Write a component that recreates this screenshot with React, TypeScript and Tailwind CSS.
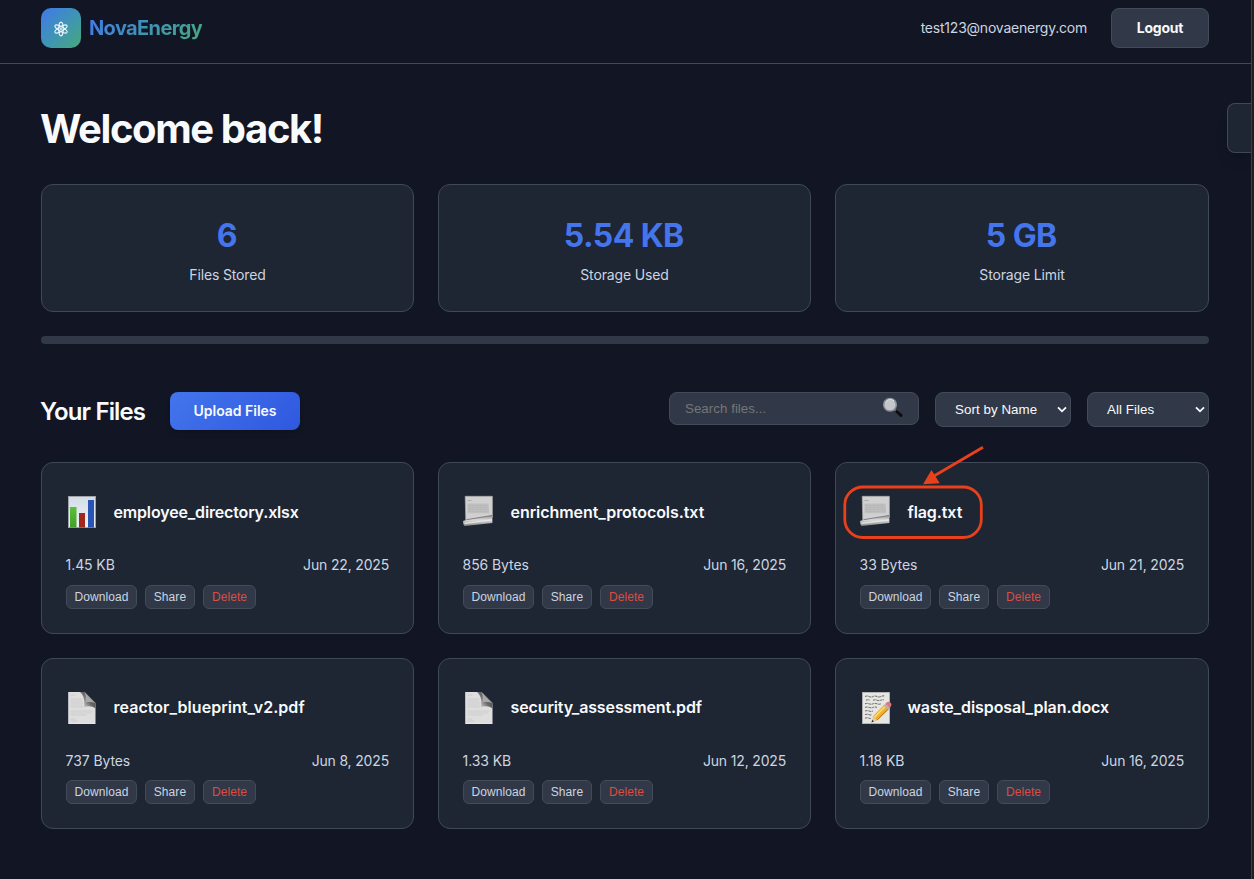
import React from 'react';

type Kind = 'chart' | 'scroll' | 'page' | 'memo';

interface FileEntry {
  name: string;
  size: string;
  date: string;
  kind: Kind;
  tracking: string;
  flagged?: boolean;
}

const files: FileEntry[] = [
  { name: 'employee_directory.xlsx', size: '1.45 KB', date: 'Jun 22, 2025', kind: 'chart', tracking: 'tracking-[-0.16px]' },
  { name: 'enrichment_protocols.txt', size: '856 Bytes', date: 'Jun 16, 2025', kind: 'scroll', tracking: 'tracking-[-0.06px]' },
  { name: 'flag.txt', size: '33 Bytes', date: 'Jun 21, 2025', kind: 'scroll', tracking: 'tracking-[-0.08px]', flagged: true },
  { name: 'reactor_blueprint_v2.pdf', size: '737 Bytes', date: 'Jun 8, 2025', kind: 'page', tracking: 'tracking-[0.04px]' },
  { name: 'security_assessment.pdf', size: '1.33 KB', date: 'Jun 12, 2025', kind: 'page', tracking: 'tracking-[-0.12px]' },
  { name: 'waste_disposal_plan.docx', size: '1.18 KB', date: 'Jun 16, 2025', kind: 'memo', tracking: 'tracking-[-0.06px]' },
];

const stats = [
  { value: '6', label: 'Files Stored' },
  { value: '5.54 KB', label: 'Storage Used' },
  { value: '5 GB', label: 'Storage Limit' },
];

function AtomIcon() {
  return (
    <svg width="16" height="16" viewBox="0 0 16 16" fill="none" stroke="#f0f6fa" strokeWidth="1.1" className="mt-[2px]">
      <ellipse cx="8" cy="8" rx="2.2" ry="6.9" />
      <ellipse cx="8" cy="8" rx="2.2" ry="6.9" transform="rotate(60 8 8)" />
      <ellipse cx="8" cy="8" rx="2.2" ry="6.9" transform="rotate(120 8 8)" />
      <circle cx="8" cy="8" r="1" fill="#f0f6fa" stroke="none" />
    </svg>
  );
}

function ChartIcon() {
  return (
    <svg width="32" height="34" viewBox="0 0 32 34">
      <defs>
        <linearGradient id="chartBg" x1="0" y1="0" x2="0" y2="1">
          <stop offset="0" stopColor="#d3dce6" />
          <stop offset="1" stopColor="#eef2f6" />
        </linearGradient>
        <linearGradient id="barGreen" x1="0" y1="0" x2="0" y2="1">
          <stop offset="0" stopColor="#5cc03c" />
          <stop offset="1" stopColor="#429f29" />
        </linearGradient>
      </defs>
      <rect x="2.5" y="1.5" width="27" height="31" fill="url(#chartBg)" stroke="#9da2ab" />
      <rect x="4" y="12" width="6.5" height="20.5" fill="url(#barGreen)" />
      <rect x="13" y="18" width="6" height="14.5" fill="#a3281b" />
      <rect x="22" y="5" width="6" height="27.5" fill="#2854b5" />
    </svg>
  );
}

function ScrollIcon() {
  return (
    <svg width="32" height="34" viewBox="0 0 32 34">
      <defs>
        <linearGradient id="rollShade" x1="0" y1="0" x2="0" y2="1">
          <stop offset="0" stopColor="#8f8f8f" />
          <stop offset="0.45" stopColor="#dcdcdc" />
          <stop offset="1" stopColor="#858585" />
        </linearGradient>
      </defs>
      <g transform="translate(-0.5 0.3)">
        <path d="M2.7 1h27.2v21L3.3 26z" fill="#d0d0d0" stroke="#aaa" strokeWidth="0.7" />
        <path d="M5 5.2h4" stroke="#999" strokeWidth="0.7" />
        <path d="M5 8.3h21l.7 9.700H5z" fill="#bfbfbf" />
        <path d="M5 10h20M6 12h20M5 14h21M6 16h20" stroke="#b2b2b2" strokeWidth="0.6" strokeDasharray="3 .8" />
        <path d="M1 25.5 29.9 20v7.8L2.3 30.6C.7 30.2.2 26.3 1 25.5z" fill="url(#rollShade)" />
        <path d="M4 24.4 29.5 20.2" stroke="#777" strokeWidth="0.9" />
        <path d="M2 28 29.5 24.6" stroke="#e6e6e6" strokeWidth="1.3" />
      </g>
    </svg>
  );
}

function PageIcon() {
  return (
    <svg width="32" height="34" viewBox="0 0 32 34">
      <defs>
        <linearGradient id="foldShade" x1="1" y1="0.2" x2="0.1" y2="0.9">
          <stop offset="0" stopColor="#3c3c3c" />
          <stop offset="0.5" stopColor="#6a6a6a" />
          <stop offset="1" stopColor="#dedede" />
        </linearGradient>
      </defs>
      <g transform="translate(0 1)">
        <path d="M2.200 1h16.300l11 11v20.800H2.200z" fill="#dedede" />
        <path
          d="M4.500 4h5M4.500 8h12M4.500 10h12M4.500 12h13M4.500 14h12M4.500 16h13M4.500 20h22M4.500 22h21M4.500 24h16M4.500 28h5M4.500 30h7"
          stroke="#c8c8c8"
          strokeWidth="0.75"
        />
        <path d="M14 1h4.500l11 11v5.500c-3-2.300-7-2.800-11.500-1.500C19 10 18 4.500 14 1z" fill="url(#foldShade)" />
        <path d="M18.500 1.200c1.400 3.200 1.500 6.300.8 10.200 4-.7 7.500-.3 10 .9z" fill="#a8a8a8" />
        <path d="M2.500 32.500h26.800" stroke="#f2f2f2" strokeWidth="0.8" />
      </g>
    </svg>
  );
}

function MemoIcon() {
  return (
    <svg width="34" height="34" viewBox="0 0 34 34">
      <g transform="translate(0 1)">
        <rect x="2.400" y="1.300" width="27.200" height="31.400" fill="#e6e6e3" stroke="#bdbdba" strokeWidth="0.6" />
        <path
          d="M5 5.500q2-1 4 0t4 0t4 0t4 0t4-.5M6 9.200q2-.8 4 0M13 9.200q2-.8 4 0t4 0t3-.3M5 12.800q2-.8 4 0t4 0t4 0t4 0M5 16.400q2-.8 4 0t4 0t4 0M5 20q2-.8 4 0t4 0M5 23.600q2-.8 4 0t3 0M5 27.200q2-.8 4 0t2 0"
          fill="none"
          stroke="#666"
          strokeWidth="1"
          strokeDasharray="2.600 .7"
        />
        <path d="M11.500 31.500l1.400-6.200 4.400 4.200z" fill="#e7c898" />
        <path d="M11.500 31.500l.7-2.700 1.700 1.600z" fill="#333" />
        <path d="M12.900 25.300 24.500 13.600l4.800 4.400-12 11.500z" fill="#eeb02d" />
        <path d="M14.400 26.400 25.800 14.800" stroke="#ffdc6a" strokeWidth="1.500" />
        <path d="M17 29 28.800 17.400" stroke="#b97813" strokeWidth="1" />
        <path d="M23.600 14.600l1.800-1.800 4.900 4.400-1.900 1.800z" fill="#a9b5bf" />
        <path d="M25.400 12.800l1.500-1.500c2.200-1.900 5.700 1.300 4.200 3.600l-1.300 2z" fill="#e0737b" />
      </g>
    </svg>
  );
}

function MagnifierIcon() {
  return (
    <svg width="22" height="22" viewBox="0 0 22 22" className="relative -left-px -top-px">
      <path d="M12.500 12.500l6 5.500" stroke="#777" strokeWidth="2" />
      <path d="M14.700 14.500l4.300 3.900" stroke="#0c0c0c" strokeWidth="3" strokeLinecap="round" />
      <circle cx="8" cy="7.800" r="6.300" fill="#c4c6cb" stroke="#8c9096" strokeWidth="1.500" />
      <path d="M3.500 5.800a5.200 5.200 0 0 1 8.500-2" fill="none" stroke="#dfe1e4" strokeWidth="1" />
    </svg>
  );
}

const icons: Record<Kind, () => React.JSX.Element> = {
  chart: ChartIcon,
  scroll: ScrollIcon,
  page: PageIcon,
  memo: MemoIcon,
};

function Callout() {
  return (
    <svg className="pointer-events-none absolute left-0 top-[-25px]" width="160" height="110" viewBox="0 0 160 110" fill="none">
      <rect x="8.800" y="49" width="136.500" height="50.500" rx="18" stroke="#e9411b" strokeWidth="2.800" />
      <path d="M147 9.200 98 38" stroke="#e9411b" strokeWidth="2.800" />
      <path d="M87 46.200 95.500 32 103.700 45.200z" fill="#e9411b" />
    </svg>
  );
}

function SmallButton({ children, width, danger }: { children: string; width: string; danger?: boolean }) {
  return (
    <button
      className={
        'h-6 whitespace-nowrap rounded-[6px] border border-[#434b5a] bg-[#313949] text-center font-["Liberation_Sans",Arial,sans-serif] text-[12px] leading-[22px] tracking-[0.08px] ' +
        width +
        (danger ? ' text-[#dc4c40]' : ' text-[#ccd5e0]')
      }
    >
      {children}
    </button>
  );
}

function FileCard({ file }: { file: FileEntry }) {
  const Icon = icons[file.kind];
  return (
    <article className="relative flex h-[171.5px] flex-col rounded-xl border border-[#404959] bg-[#1e2533] pl-[24px] pr-[24px] pt-[30.9px]">
      <div className="flex h-[36px] items-center">
        <div className="h-[34px] w-8 shrink-0">
          <Icon />
        </div>
        <h3 className={'ml-[15.5px] whitespace-nowrap text-[16px] font-semibold text-[#f8fafc] ' + file.tracking}>{file.name}</h3>
      </div>
      <div className="mt-[23.7px] flex h-[22px] items-center justify-between text-[14px] tracking-[-0.17px] text-[#ccd5e0]">
        <span className="-ml-[0.4px] tracking-[-0.1px]">{file.size}</span>
        <span>{file.date}</span>
      </div>
      <div className="mt-[9.3px] flex gap-2">
        <SmallButton width="w-[71px]">Download</SmallButton>
        <SmallButton width="w-[50px]">Share</SmallButton>
        <SmallButton width="w-[53px]" danger>
          Delete
        </SmallButton>
      </div>
      {file.flagged && <Callout />}
    </article>
  );
}

function Select({ label, className }: { label: string; className: string }) {
  return (
    <button
      className={
        'flex h-[35px] items-center justify-between rounded-lg border border-[#434b5a] bg-[#313949] pl-[19px] pr-[3px] font-["Liberation_Sans",Arial,sans-serif] text-[13.333px] tracking-[0.06px] text-[#f8fafc] ' +
        className
      }
    >
      <span>{label}</span>
      <svg width="10" height="7" viewBox="0 0 10 7" fill="none" stroke="#f8fafc" strokeWidth="1.800">
        <path d="M1 1.300l4 4 4-4" />
      </svg>
    </button>
  );
}

export default function App() {
  return (
    <div className='relative flex h-[879px] w-[1254px] overflow-hidden bg-[#121523] font-["Inter",sans-serif] text-[#f8fafc]'>
      <div className="min-w-0 flex-1">
        <header className="flex h-16 items-start justify-between border-b border-[#424958] pl-[41px] pr-[42px] pt-2">
          <div className="flex h-10 items-center gap-2">
            <div className="flex size-10 items-center justify-center rounded-[10px] bg-linear-135 from-[#4475ec] to-[#49a877]">
              <AtomIcon />
            </div>
            <span className="bg-linear-135 from-[#4475ec] to-[#49a877] bg-clip-text text-[20px] font-bold leading-[30px] tracking-[-0.62px] text-transparent">
              NovaEnergy
            </span>
          </div>
          <div className="flex h-10 items-center gap-6">
            <span className="pb-[2px] text-[14px] tracking-[-0.22px] text-[#ccd5e0]">test123@novaenergy.com</span>
            <button className="h-10 w-[98px] rounded-lg border border-[#434b5a] bg-[#313949] pb-[2px] text-[14px] font-bold tracking-[-0.2px]">
              Logout
            </button>
          </div>
        </header>

        <main className="pl-[41px] pr-[42px] pt-[41px]">
          <h1 className="-ml-px h-12 text-[40px] font-bold leading-[48px] tracking-[-1.4px]">Welcome back!</h1>

          <section className="mt-[31px] grid grid-cols-[373fr_373fr_374fr] gap-6">
            {stats.map((s) => (
              <div key={s.label} className="flex h-32 flex-col items-center rounded-xl border border-[#404959] bg-[#1e2533] pt-[27px]">
                <div className="mr-[1.5px] h-12 text-[32px] font-bold leading-[48px] tracking-[-0.6px] text-[#4475ec]">{s.value}</div>
                <div className="mt-[4px] text-[14px] leading-[22px] tracking-[-0.14px] text-[#ccd5e0]">{s.label}</div>
              </div>
            ))}
          </section>

          <div className="mt-6 h-2 rounded bg-[#313949]" />

          <section className="mt-12 flex h-[38px] items-start">
            <h2 className="-ml-px w-[130px] whitespace-nowrap text-[24px] font-semibold leading-[39px] tracking-[-0.85px]">Your Files</h2>
            <button className="h-[38px] w-[130px] rounded-lg bg-linear-135 from-[#4475ec] to-[#2f57df] pb-[2px] text-[14px] font-semibold tracking-[-0.02px] shadow-md">
              Upload Files
            </button>
            <div className="ml-auto flex items-start gap-4">
              <div className='flex h-[33px] w-[250px] items-center justify-between rounded-lg border border-[#434b5a] bg-[#313949] pl-[15px] pr-[13px] font-["Liberation_Sans",Arial,sans-serif] text-[13.333px] tracking-[0.03px] text-[#757575]'>
                <span>Search files...</span>
                <MagnifierIcon />
              </div>
              <Select label="Sort by Name" className="w-[136px]" />
              <Select label="All Files" className="w-[122px]" />
            </div>
          </section>

          <section className="mt-8 grid grid-cols-[373fr_373fr_374fr] gap-6">
            {files.map((f) => (
              <FileCard key={f.name} file={f} />
            ))}
          </section>
        </main>
      </div>

      <div className="absolute left-[1227px] top-[103px] h-[50px] w-[24px] rounded-l-lg border border-r-0 border-[#404959] bg-[#1e2533] shadow-lg" />
      <div className="w-[3px] border-l border-[#41403f] bg-[#211f20]" />
    </div>
  );
}
